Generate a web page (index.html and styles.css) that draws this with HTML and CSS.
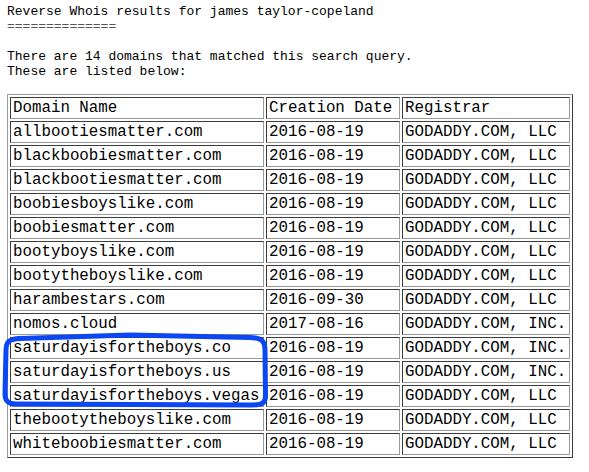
FILE: index.html
```html
<!DOCTYPE html>
<html>
<head>
<meta charset="utf-8">
<link rel="stylesheet" href="styles.css">
</head>
<body>
<div class="page">
<pre class="intro">Reverse Whois results for james taylor-copeland
<span class="rule">==============</span>

There are 14 domains that matched this search query.
These are listed below:

</pre>
<table class="results">
<colgroup><col class="c1"><col class="c2"><col class="c3"></colgroup>
<tr><td>Domain Name</td><td>Creation Date</td><td>Registrar</td></tr>
<tr><td>allbootiesmatter.com</td><td>2016-08-19</td><td>GODADDY.COM, LLC</td></tr>
<tr><td>blackboobiesmatter.com</td><td>2016-08-19</td><td>GODADDY.COM, LLC</td></tr>
<tr><td>blackbootiesmatter.com</td><td>2016-08-19</td><td>GODADDY.COM, LLC</td></tr>
<tr><td>boobiesboyslike.com</td><td>2016-08-19</td><td>GODADDY.COM, LLC</td></tr>
<tr><td>boobiesmatter.com</td><td>2016-08-19</td><td>GODADDY.COM, LLC</td></tr>
<tr><td>bootyboyslike.com</td><td>2016-08-19</td><td>GODADDY.COM, LLC</td></tr>
<tr><td>bootytheboyslike.com</td><td>2016-08-19</td><td>GODADDY.COM, LLC</td></tr>
<tr><td>harambestars.com</td><td>2016-09-30</td><td>GODADDY.COM, LLC</td></tr>
<tr><td>nomos.cloud</td><td>2017-08-16</td><td>GODADDY.COM, INC.</td></tr>
<tr><td>saturdayisfortheboys.co</td><td>2016-08-19</td><td>GODADDY.COM, INC.</td></tr>
<tr><td>saturdayisfortheboys.us</td><td>2016-08-19</td><td>GODADDY.COM, INC.</td></tr>
<tr><td>saturdayisfortheboys.vegas</td><td>2016-08-19</td><td>GODADDY.COM, LLC</td></tr>
<tr><td>thebootytheboyslike.com</td><td>2016-08-19</td><td>GODADDY.COM, LLC</td></tr>
<tr><td>whiteboobiesmatter.com</td><td>2016-08-19</td><td>GODADDY.COM, LLC</td></tr>
</table>
<svg class="marker" width="589" height="472" viewBox="0 0 589 472">
<path d="M6 350 C6 341 10 339 20 338.5 L130 335 L250 337.5 C262 338 265 341 265 350 L265.5 396 C265.5 403 262 405 252 405 L16 404 C8 404 5 401 5 394 Z" fill="none" stroke="#0b47f2" stroke-width="5" stroke-linejoin="round"/>
</svg>
</div>
</body>
</html>
```

FILE: styles.css
```css
html, body {
  margin: 0;
  padding: 0;
  background: #ffffff;
}

.page {
  position: relative;
  padding: 4px 7px 0 7px;
  width: 589px;
  height: 472px;
  box-sizing: border-box;
  overflow: hidden;
}

.intro {
  margin: 0;
  font-family: "Liberation Mono", "DejaVu Sans Mono", monospace;
  font-size: 13px;
  line-height: 15px;
  color: #000;
}

.rule {
  color: #555;
}

.results {
  border: 1px solid;
  border-color: #9a9a9a #3c3c3c #3c3c3c #9a9a9a;
  border-spacing: 2px;
  table-layout: fixed;
  width: 566px;
  font-family: "Liberation Mono", "DejaVu Sans Mono", monospace;
  font-size: 15.8px;
  color: #000;
}

.c1 { width: 254px; }
.c2 { width: 134px; }
.c3 { width: 168px; }

.results td {
  border: 1px solid;
  border-color: #3c3c3c #9a9a9a #9a9a9a #3c3c3c;
  padding: 1px 1px 1px 2px;
  height: 18px;
  line-height: 18px;
  white-space: nowrap;
  overflow: hidden;
}

.marker {
  position: absolute;
  left: 0;
  top: 0;
  pointer-events: none;
}
```
